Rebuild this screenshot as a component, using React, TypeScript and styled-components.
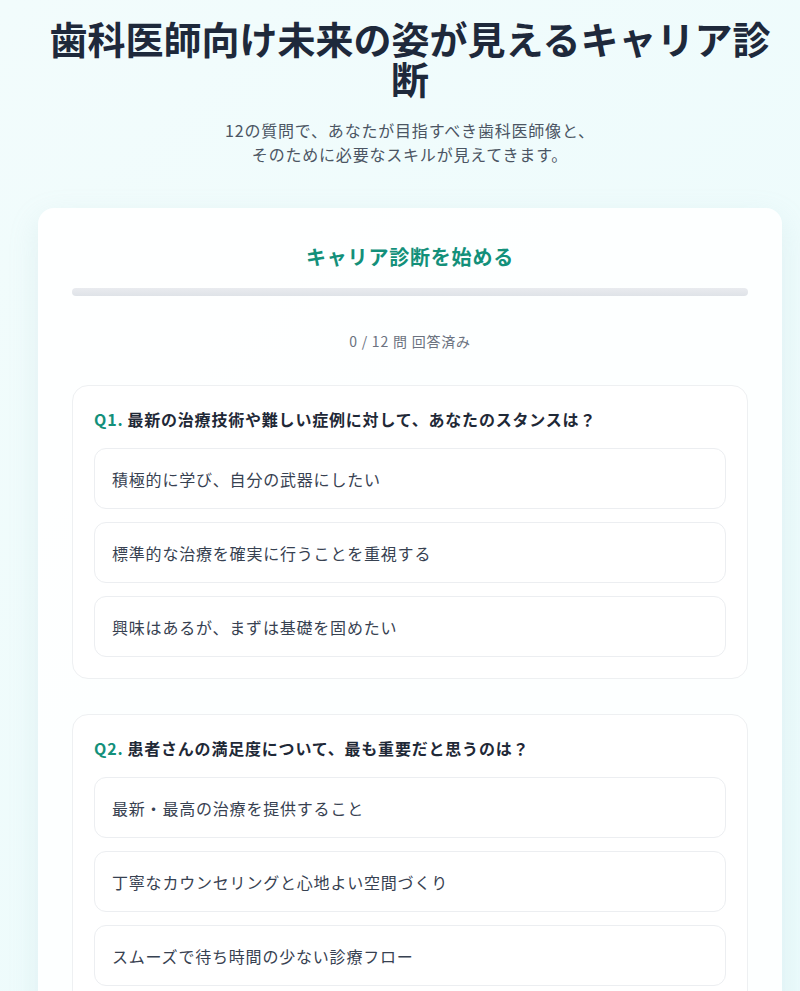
import React from 'react'
import styled, { createGlobalStyle } from 'styled-components'

const GlobalStyle = createGlobalStyle`
  * { box-sizing: border-box; }
  body {
    margin: 0;
    background: linear-gradient(135deg, #f2fcfc 0%, #ebfbfc 100%);
    font-family: "Noto Sans CJK JP", "Noto Sans", sans-serif;
    letter-spacing: 0.05em;
    color: #1f2937;
  }
`

const Page = styled.div`
  width: 744px;
  margin-left: 38px;
  padding-top: 18px;
  padding-bottom: 40px;
`

const Header = styled.header`
  text-align: center;
  margin-bottom: 42px;
`

const Title = styled.h1`
  margin: 0 0 20px;
  font-size: 38px;
  line-height: 40px;
  font-weight: 700;
  letter-spacing: 0;
  color: #1e293b;
  padding: 0 4px;
`

const Subtitle = styled.p`
  margin: 0;
  font-size: 16px;
  line-height: 24px;
  color: #4b5563;
`

const Card = styled.section`
  background: rgba(255, 255, 255, 0.88);
  border-radius: 16px;
  box-shadow: 0 10px 30px rgba(148, 190, 195, 0.18);
  padding: 34px 34px 34px;
`

const CardTitle = styled.h2`
  margin: 0 0 16px;
  text-align: center;
  font-size: 20px;
  line-height: 30px;
  font-weight: 700;
  color: #13907a;
`

const Progress = styled.div`
  height: 8px;
  border-radius: 4px;
  background: linear-gradient(180deg, #e9ebef 0%, #dfe3e8 100%);
  overflow: hidden;
`

const ProgressFill = styled.div`
  height: 100%;
  background: #13907a;
`

const Count = styled.p`
  margin: 35px 0 34px;
  text-align: center;
  font-size: 14px;
  line-height: 20px;
  color: #6b7280;
`

const QuestionList = styled.div`
  display: flex;
  flex-direction: column;
  gap: 35px;
`

const Question = styled.div`
  border: 1px solid #eef0f2;
  border-radius: 16px;
  background: #fff;
  padding: 21px 21px 21px;
`

const QuestionTitle = styled.h3`
  margin: 0 0 17px;
  font-size: 16px;
  line-height: 24px;
  font-weight: 700;
  color: #1f2937;
`

const QNum = styled.span`
  color: #13907a;
  margin-right: 4px;
`

const Options = styled.div`
  display: flex;
  flex-direction: column;
  gap: 13px;
`

const Option = styled.button`
  display: block;
  width: 100%;
  height: 61px;
  text-align: left;
  padding: 0 17px;
  border: 1px solid #eceef1;
  border-radius: 12px;
  background: #fff;
  font-family: inherit;
  font-size: 16px;
  letter-spacing: 0.05em;
  color: #374151;
  cursor: pointer;
`

const questions = [
  {
    q: '最新の治療技術や難しい症例に対して、あなたのスタンスは？',
    options: ['積極的に学び、自分の武器にしたい', '標準的な治療を確実に行うことを重視する', '興味はあるが、まずは基礎を固めたい'],
  },
  {
    q: '患者さんの満足度について、最も重要だと思うのは？',
    options: ['最新・最高の治療を提供すること', '丁寧なカウンセリングと心地よい空間づくり', 'スムーズで待ち時間の少ない診療フロー'],
  },
]

export default function App() {
  const answered = 0
  return (
    <>
      <GlobalStyle />
      <Page>
        <Header>
          <Title>歯科医師向け未来の姿が見えるキャリア診断</Title>
          <Subtitle>
            12の質問で、あなたが目指すべき歯科医師像と、
            <br />
            そのために必要なスキルが見えてきます。
          </Subtitle>
        </Header>
        <Card>
          <CardTitle>キャリア診断を始める</CardTitle>
          <Progress>
            <ProgressFill style={{ width: `${(answered / 12) * 100}%` }} />
          </Progress>
          <Count>{answered} / 12 問 回答済み</Count>
          <QuestionList>
            {questions.map((item, i) => (
              <Question key={i}>
                <QuestionTitle>
                  <QNum>Q{i + 1}.</QNum>
                  {item.q}
                </QuestionTitle>
                <Options>
                  {item.options.map((o) => (
                    <Option key={o}>{o}</Option>
                  ))}
                </Options>
              </Question>
            ))}
          </QuestionList>
        </Card>
      </Page>
    </>
  )
}
